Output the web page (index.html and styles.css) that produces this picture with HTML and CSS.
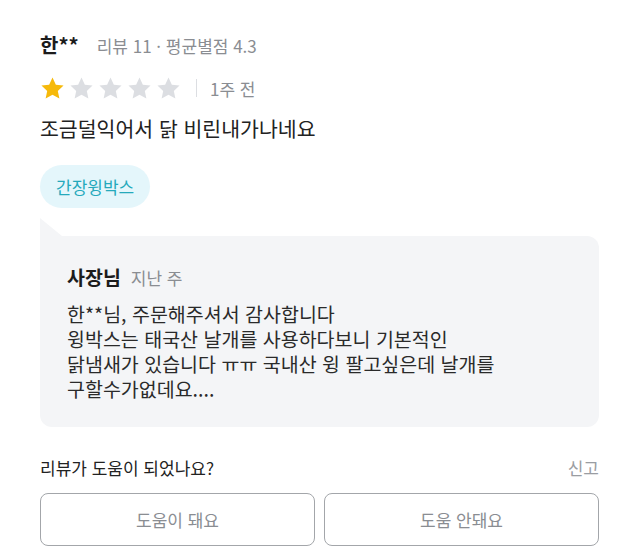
FILE: index.html
```html
<!DOCTYPE html>
<html lang="ko">
<head>
  <meta charset="UTF-8" />
  <title>리뷰</title>
  <link rel="stylesheet" href="styles.css">
</head>
<body>
  <div class="review">
    <div class="review-head">
      <span class="user-name">한**</span>
      <span class="user-meta">리뷰 11 · 평균별점 4.3</span>
    </div>
    <div class="rating-row">
      <div class="stars">
        <svg class="star on" viewBox="0 0 24 24"><path d="M12 1.5l3.2 6.9 7.4.8-5.5 5.1 1.5 7.4L12 17.9l-6.6 3.8 1.5-7.4L1.4 9.2l7.4-.8z"/></svg>
        <svg class="star" viewBox="0 0 24 24"><path d="M12 1.5l3.2 6.9 7.4.8-5.5 5.1 1.5 7.4L12 17.9l-6.6 3.8 1.5-7.4L1.4 9.2l7.4-.8z"/></svg>
        <svg class="star" viewBox="0 0 24 24"><path d="M12 1.5l3.2 6.9 7.4.8-5.5 5.1 1.5 7.4L12 17.9l-6.6 3.8 1.5-7.4L1.4 9.2l7.4-.8z"/></svg>
        <svg class="star" viewBox="0 0 24 24"><path d="M12 1.5l3.2 6.9 7.4.8-5.5 5.1 1.5 7.4L12 17.9l-6.6 3.8 1.5-7.4L1.4 9.2l7.4-.8z"/></svg>
        <svg class="star" viewBox="0 0 24 24"><path d="M12 1.5l3.2 6.9 7.4.8-5.5 5.1 1.5 7.4L12 17.9l-6.6 3.8 1.5-7.4L1.4 9.2l7.4-.8z"/></svg>
      </div>
      <span class="divider"></span>
      <span class="review-date">1주 전</span>
    </div>
    <p class="review-text">조금덜익어서 닭 비린내가나네요</p>
    <div class="tags">
      <span class="tag">간장윙박스</span>
    </div>

    <div class="reply">
      <div class="reply-head">
        <span class="reply-name">사장님</span>
        <span class="reply-date">지난 주</span>
      </div>
      <p class="reply-text">한**님, 주문해주셔서 감사합니다<br>윙박스는 태국산 날개를 사용하다보니 기본적인<br>닭냄새가 있습니다 ㅠㅠ 국내산 윙 팔고싶은데 날개를<br>구할수가없데요....</p>
    </div>

    <div class="helpful-row">
      <span class="helpful-q">리뷰가 도움이 되었나요?</span>
      <span class="report">신고</span>
    </div>
    <div class="helpful-btns">
      <button class="helpful-btn">도움이 돼요</button>
      <button class="helpful-btn">도움 안돼요</button>
    </div>
  </div>
</body>
</html>
```

FILE: styles.css
```css
html, body {
  margin: 0;
  padding: 0;
  background: #fff;
  font-family: "Noto Sans CJK KR", "Noto Sans", sans-serif;
  color: #222;
}
.review {
  padding: 30px 41px 0 40px;
}
.review-head {
  display: flex;
  align-items: baseline;
  gap: 18px;
  height: 30px;
  line-height: 30px;
}
.user-name {
  font-size: 20px;
  font-weight: 700;
  color: #1c1c1c;
}
.user-meta {
  font-size: 17px;
  color: #8a8d92;
}
.rating-row {
  display: flex;
  align-items: center;
  margin-top: 15px;
  height: 26px;
}
.stars {
  display: flex;
  gap: 4px;
}
.star {
  width: 25px;
  height: 25px;
  fill: #dcdee2;
}
.star.on {
  fill: #f6b90a;
}
.divider {
  width: 1px;
  height: 18px;
  background: #dcdee2;
  margin: 0 13px 0 15px;
}
.review-date {
  font-size: 17px;
  color: #8a8d92;
}
.review-text {
  margin: 13px 0 0 0;
  font-size: 20.5px;
  line-height: 28px;
  color: #222;
}
.tags {
  display: flex;
  margin-top: 23px;
}
.tag {
  background: #e4f6fb;
  color: #25a9bb;
  font-size: 17px;
  line-height: 43px;
  height: 43px;
  padding: 0 16px;
  border-radius: 22px;
}
.reply {
  position: relative;
  margin-top: 28px;
  background: #f4f5f7;
  border-radius: 0 12px 12px 12px;
  padding: 28px 27px 26px 27px;
}
.reply::before {
  content: "";
  position: absolute;
  left: 0;
  top: -18px;
  width: 22px;
  height: 18px;
  background: #f4f5f7;
  clip-path: polygon(0 0, 100% 100%, 0 100%);
}
.reply-head {
  display: flex;
  align-items: baseline;
  gap: 10px;
  line-height: 26px;
}
.reply-name {
  font-size: 19.5px;
  font-weight: 700;
  color: #1c1c1c;
}
.reply-date {
  font-size: 17px;
  color: #8a8d92;
}
.reply-text {
  margin: 10px 0 0 0;
  font-size: 19.5px;
  line-height: 25px;
  color: #2a2a2a;
}
.helpful-row {
  display: flex;
  justify-content: space-between;
  align-items: center;
  margin-top: 27px;
  height: 26px;
}
.helpful-q {
  font-size: 17px;
  color: #222;
}
.report {
  font-size: 17px;
  color: #9a9da2;
}
.helpful-btns {
  display: flex;
  gap: 9px;
  margin-top: 13px;
}
.helpful-btn {
  flex: 1;
  height: 53px;
  background: #fff;
  border: 1.5px solid #a3a6aa;
  border-radius: 8px;
  font-family: inherit;
  font-size: 17px;
  color: #8a8d92;
}
```
